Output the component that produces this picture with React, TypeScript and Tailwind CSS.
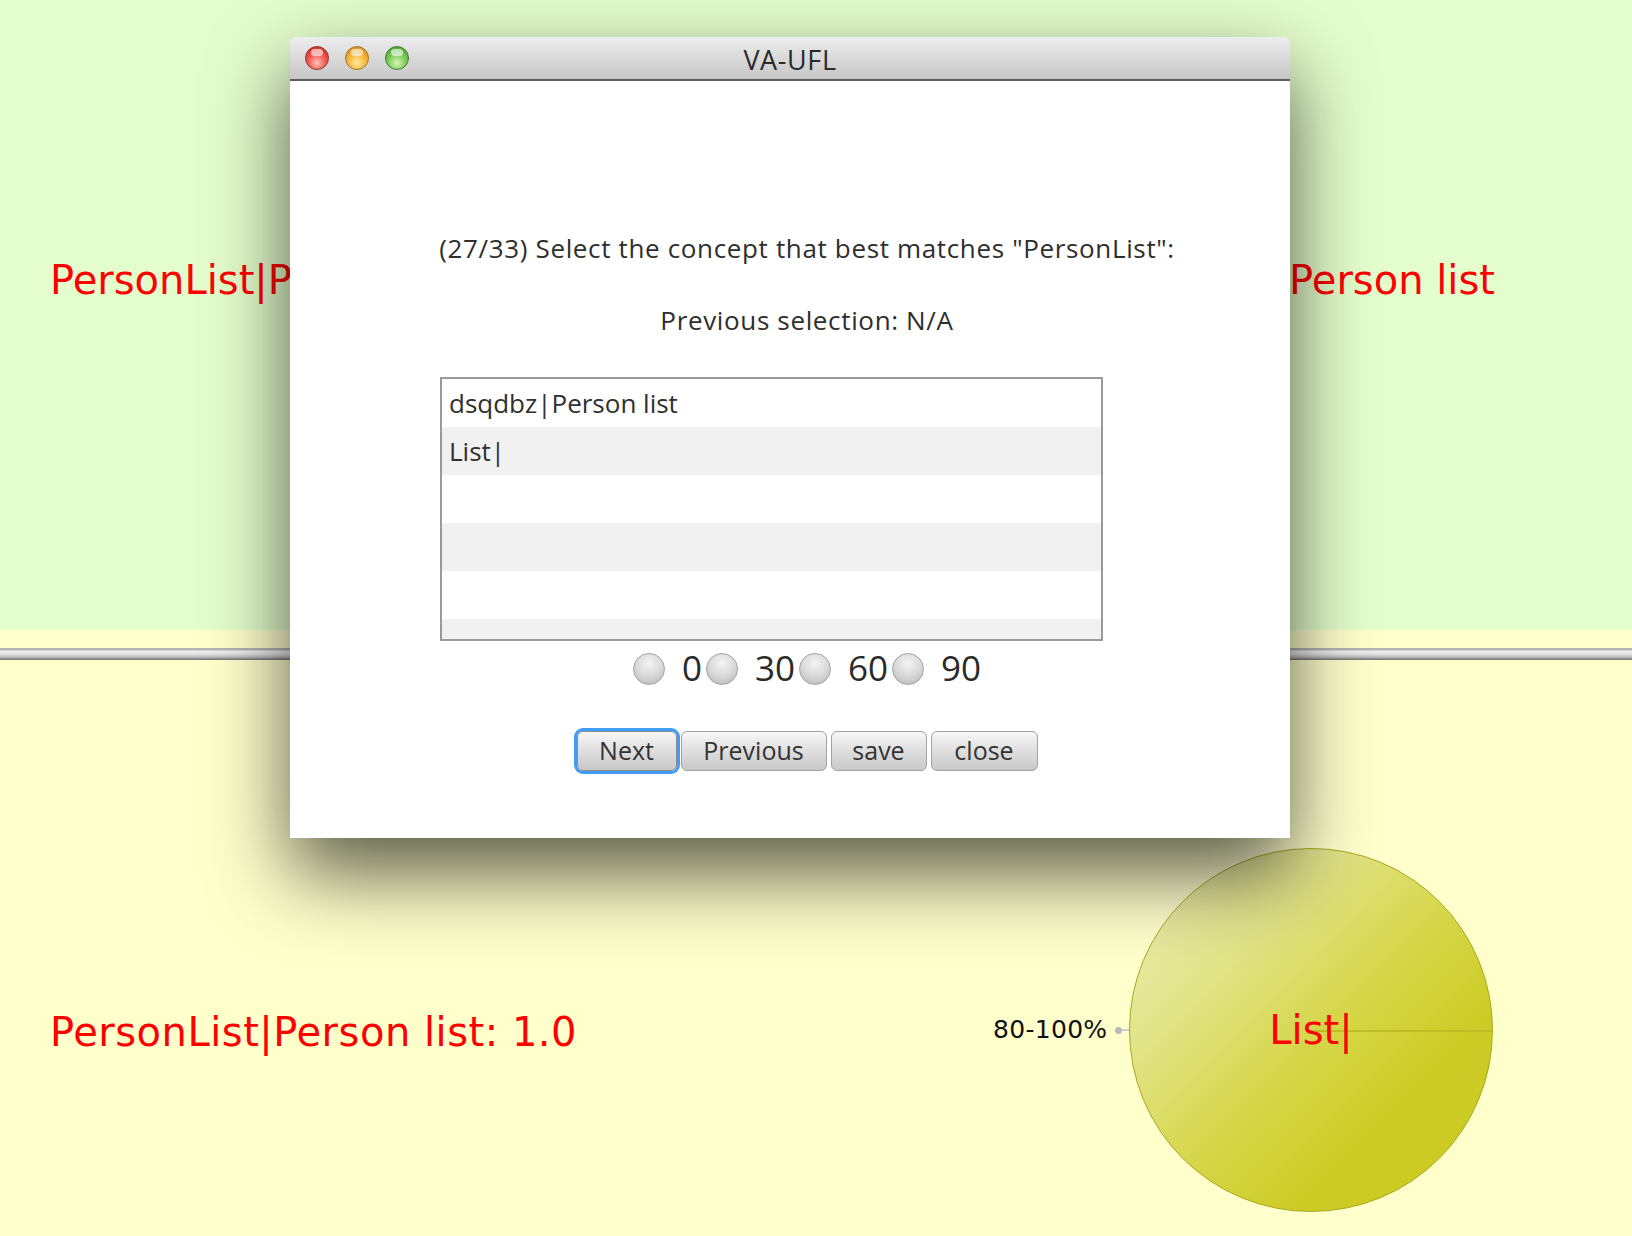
import React from 'react';

const rows = ['dsqdbz|Person list', 'List|', '', '', '', ''];
const angles = ['0', '30', '60', '90'];

function Light({ kind }: { kind: 'red' | 'orange' | 'green' }) {
  const cls =
    kind === 'red'
      ? 'bg-[radial-gradient(circle_at_50%_72%,#ffc2b8_0%,#f0564c_48%,#b8251f_100%)] border-[#9c2b25]'
      : kind === 'orange'
      ? 'bg-[radial-gradient(circle_at_50%_72%,#ffe9a0_0%,#f5b53a_48%,#c9801c_100%)] border-[#a8721e]'
      : 'bg-[radial-gradient(circle_at_50%_72%,#d8f7b8_0%,#78c956_48%,#3f9327_100%)] border-[#3c7d28]';
  return (
    <div className={`relative w-[24px] h-[24px] rounded-full border ${cls}`}>
      <div className="absolute left-[5px] top-[2px] w-[12px] h-[7px] rounded-full bg-white/60" />
    </div>
  );
}

export default function App() {
  return (
    <div className="relative w-[1632px] h-[1236px] overflow-hidden bg-[#ffffcc] font-['DejaVu_Sans',sans-serif]">
      {/* canvas background */}
      <div className="h-[630px] bg-[#e4fdcc]" />
      <div className="mt-[18px] h-[12px] bg-[linear-gradient(to_bottom,#b4b4b4_0px,#b4b4b4_2px,#f2f2f2_3px,#e4e4e4_6px,#bdbdbd_9px,#8a8a8a_11px,#6a6a6a_12px)]" />

      {/* graph labels */}
      <div className="absolute left-[50px] top-[260px] text-[40px] leading-[40px] text-[#ff0000] whitespace-nowrap">
        PersonList|Person list: 1.0
      </div>
      <div className="absolute right-[137px] top-[260px] text-[40px] leading-[40px] text-[#ff0000] whitespace-nowrap">
        dsqdbz|Person list
      </div>
      <div className="absolute left-[50px] top-[1012px] text-[40px] leading-[40px] tracking-[0.5px] text-[#ff0000] whitespace-nowrap">
        PersonList|Person list: 1.0
      </div>

      {/* bubble node */}
      <div className="absolute left-[993px] top-[848px] flex items-center">
        <div className="w-[113px] text-[25px] leading-[30px] tracking-[0.3px] text-[#111] whitespace-nowrap">80-100%</div>
        <div className="ml-[9px] w-[7px] h-[7px] rounded-full bg-[#b8b8b8]" />
        <div className="w-[7px] h-[2px] bg-[#cfcfcf]" />
        <div className="relative w-[364px] h-[364px] rounded-full border border-[#a9a91e] bg-[linear-gradient(135deg,#eeeeb8_0%,#e2e48a_28%,#d6d64a_52%,#cdcc26_72%,#cbca22_100%)] flex items-center justify-center">
          <div className="absolute left-1/2 right-0 top-1/2 h-[2px] bg-[#bcbc24]" />
          <span className="relative text-[40px] leading-[40px] text-[#ff0000]">List|</span>
        </div>
      </div>

      {/* dialog window */}
      <div className="absolute left-[290px] top-[37px] w-[1000px] h-[801px] flex flex-col rounded-t-[7px] bg-white shadow-[0_35px_80px_rgba(0,0,0,0.65)] font-['Open_Sans',sans-serif]">
        <div className="h-[44px] shrink-0 grid grid-cols-[1fr_auto_1fr] items-center rounded-t-[7px] border-b-2 border-[#5e5e5e] bg-[linear-gradient(to_bottom,#ededed,#d6d6d6_60%,#c6c6c6)]">
          <div className="flex items-center gap-[16px] pl-[15px]">
            <Light kind="red" />
            <Light kind="orange" />
            <Light kind="green" />
          </div>
          <div className="pt-[4px] text-[27px] leading-[34px] tracking-[0.6px] text-[#2b2b2b]">VA-UFL</div>
          <div />
        </div>

        <div className="flex flex-col items-center pl-[34px] pt-[149px] text-[#2e2e2e]">
          <p className="text-[26px] leading-[36px] tracking-[0.65px] whitespace-nowrap">
            (27/33) Select the concept that best matches "PersonList":
          </p>
          <p className="mt-[36px] text-[26px] leading-[36px] tracking-[0.65px] whitespace-nowrap">
            Previous selection: N/A
          </p>

          <div className="mt-[39px] self-start ml-[116px] w-[663px] h-[264px] border-2 border-[#9a9a9a] overflow-hidden">
            {rows.map((r, i) => (
              <div
                key={i}
                className={`h-[48px] shrink-0 flex items-center pl-[7px] text-[26px] text-[#303030] whitespace-nowrap ${
                  i % 2 === 1 ? 'bg-[#f1f1f1]' : 'bg-white'
                }`}
              >
                {r}
              </div>
            ))}
          </div>

          <div className="mt-[12px] h-[32px] flex items-center">
            {angles.map((a, i) => (
              <div key={a} className={`flex items-center ${i > 0 ? 'ml-[4px]' : ''}`}>
                <div className="w-[32px] h-[32px] rounded-full border border-[#a3a3a3] bg-[radial-gradient(circle_at_50%_30%,#f4f4f4_0%,#d6d6d6_55%,#b4b4b4_100%)]" />
                <span className="ml-[17px] pb-[3px] text-[35px] leading-[32px] text-[#2a2a2a]">{a}</span>
              </div>
            ))}
          </div>

          <div className="mt-[46px] flex items-center gap-[4px] text-[25px] text-[#333]">
            <button className="w-[100px] h-[40px] rounded-[6px] border border-[#8c8c8c] bg-[linear-gradient(to_bottom,#f7f7f7,#dedede_50%,#c9c9c9)] ring-[3px] ring-[#3f9cf7]">
              Next
            </button>
            <button className="w-[146px] h-[40px] rounded-[6px] border border-[#a2a2a2] bg-[linear-gradient(to_bottom,#f7f7f7,#dedede_50%,#c9c9c9)]">
              Previous
            </button>
            <button className="w-[96px] h-[40px] rounded-[6px] border border-[#a2a2a2] bg-[linear-gradient(to_bottom,#f7f7f7,#dedede_50%,#c9c9c9)]">
              save
            </button>
            <button className="w-[107px] h-[40px] rounded-[6px] border border-[#a2a2a2] bg-[linear-gradient(to_bottom,#f7f7f7,#dedede_50%,#c9c9c9)]">
              close
            </button>
          </div>
        </div>
      </div>
    </div>
  );
}
